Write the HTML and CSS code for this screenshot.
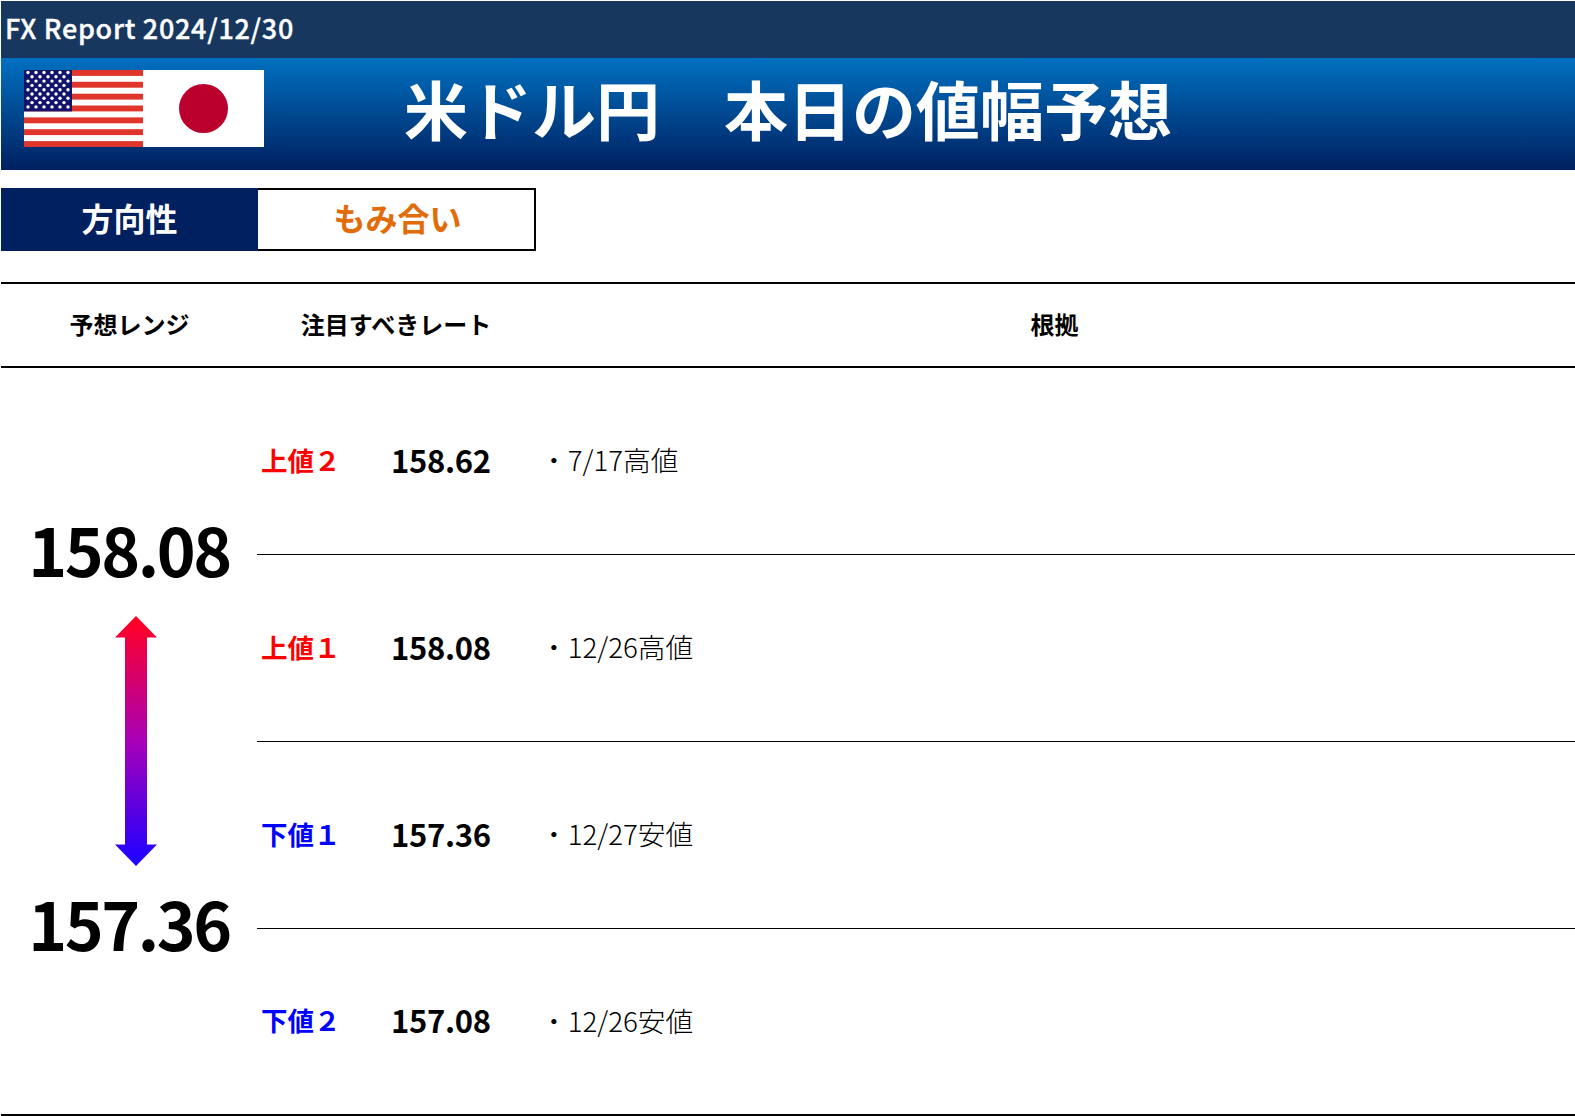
FILE: index.html
```html
<!DOCTYPE html>
<html lang="ja">
<head>
<meta charset="utf-8">
<title>FX Report</title>
<link rel="stylesheet" href="styles.css">
</head>
<body>
<div class="page">
  <div class="topbar">FX Report 2024/12/30</div>
  <header class="banner">
    <div class="flags">
      <svg class="flag" width="119" height="77" viewBox="0 0 119 77" preserveAspectRatio="none">
        <defs>
          <g id="s"><circle r="1.7" fill="#fff"/></g>
        </defs>
        <rect width="119" height="77" fill="#fff"/>
        <g fill="#e0352b">
          <rect y="0" width="119" height="5.9"/><rect y="11.8" width="119" height="5.9"/><rect y="23.7" width="119" height="5.9"/><rect y="35.5" width="119" height="5.9"/><rect y="47.4" width="119" height="5.9"/><rect y="59.2" width="119" height="5.9"/><rect y="71.1" width="119" height="5.9"/>
        </g>
        <rect width="48" height="41.4" fill="#12146b"/>
        <g>
          <use href="#s" x="4" y="2.5"/><use href="#s" x="12" y="2.5"/><use href="#s" x="20" y="2.5"/><use href="#s" x="28" y="2.5"/><use href="#s" x="36" y="2.5"/><use href="#s" x="44" y="2.5"/>
          <use href="#s" x="8" y="6.8"/><use href="#s" x="16" y="6.8"/><use href="#s" x="24" y="6.8"/><use href="#s" x="32" y="6.8"/><use href="#s" x="40" y="6.8"/>
          <use href="#s" x="4" y="11.1"/><use href="#s" x="12" y="11.1"/><use href="#s" x="20" y="11.1"/><use href="#s" x="28" y="11.1"/><use href="#s" x="36" y="11.1"/><use href="#s" x="44" y="11.1"/>
          <use href="#s" x="8" y="15.4"/><use href="#s" x="16" y="15.4"/><use href="#s" x="24" y="15.4"/><use href="#s" x="32" y="15.4"/><use href="#s" x="40" y="15.4"/>
          <use href="#s" x="4" y="19.7"/><use href="#s" x="12" y="19.7"/><use href="#s" x="20" y="19.7"/><use href="#s" x="28" y="19.7"/><use href="#s" x="36" y="19.7"/><use href="#s" x="44" y="19.7"/>
          <use href="#s" x="8" y="24"/><use href="#s" x="16" y="24"/><use href="#s" x="24" y="24"/><use href="#s" x="32" y="24"/><use href="#s" x="40" y="24"/>
          <use href="#s" x="4" y="28.3"/><use href="#s" x="12" y="28.3"/><use href="#s" x="20" y="28.3"/><use href="#s" x="28" y="28.3"/><use href="#s" x="36" y="28.3"/><use href="#s" x="44" y="28.3"/>
          <use href="#s" x="8" y="32.6"/><use href="#s" x="16" y="32.6"/><use href="#s" x="24" y="32.6"/><use href="#s" x="32" y="32.6"/><use href="#s" x="40" y="32.6"/>
          <use href="#s" x="4" y="36.9"/><use href="#s" x="12" y="36.9"/><use href="#s" x="20" y="36.9"/><use href="#s" x="28" y="36.9"/><use href="#s" x="36" y="36.9"/><use href="#s" x="44" y="36.9"/>
        </g>
      </svg>
      <svg class="flag" width="121" height="77" viewBox="0 0 121 77">
        <rect width="121" height="77" fill="#fff"/>
        <circle cx="60.5" cy="38.5" r="24.5" fill="#bc002d"/>
      </svg>
    </div>
    <h1 class="title">米ドル円　本日の値幅予想</h1>
  </header>

  <div class="direction">
    <div class="direction-label">方向性</div>
    <div class="direction-value">もみ合い</div>
  </div>

  <div class="heads">
    <div>予想レンジ</div>
    <div>注目すべきレート</div>
    <div>根拠</div>
  </div>

  <div class="body">
    <div class="range">
      <div class="range-num">158.08</div>
      <svg class="arrow" width="44" height="250" viewBox="0 0 44 250">
        <defs>
          <linearGradient id="ag" x1="0" y1="0" x2="0" y2="1">
            <stop offset="0.02" stop-color="#ff0025"/>
            <stop offset="0.5" stop-color="#a800b8"/>
            <stop offset="0.98" stop-color="#2000ff"/>
          </linearGradient>
        </defs>
        <path d="M22 0 L43 21.5 H33 V228.5 H43 L22 250 L1 228.5 H11 V21.5 H1 Z" fill="url(#ag)"/>
      </svg>
      <div class="range-num">157.36</div>
    </div>
    <div class="rows">
      <div class="row">
        <div class="label up">上値２</div><div class="rate">158.62</div><div class="why">・7/17高値</div>
      </div>
      <div class="row">
        <div class="label up">上値１</div><div class="rate">158.08</div><div class="why">・12/26高値</div>
      </div>
      <div class="row">
        <div class="label down">下値１</div><div class="rate">157.36</div><div class="why">・12/27安値</div>
      </div>
      <div class="row">
        <div class="label down">下値２</div><div class="rate">157.08</div><div class="why">・12/26安値</div>
      </div>
    </div>
  </div>
</div>
</body>
</html>
```

FILE: styles.css
```css
* { box-sizing: border-box; margin: 0; padding: 0; }
html, body { background: #fff; }
body {
  font-family: "Noto Sans CJK JP", "Noto Sans", sans-serif;
  color: #000;
  overflow: hidden;
}
.page {
  width: 1575px;
  height: 1116px;
  padding: 1px 0 0 1px;
}
.topbar {
  height: 57px;
  background: #17375e;
  color: #fff;
  font-size: 27px;
  font-weight: 500;
  letter-spacing: 0.7px;
  -webkit-text-stroke: 0.35px #fff;
  line-height: 53px;
  padding-left: 4px;
}
.banner {
  position: relative;
  height: 112px;
  padding-bottom: 15px;
  background: linear-gradient(#0070c0, #002060);
  display: flex;
  align-items: center;
  justify-content: center;
}
.flags {
  position: absolute;
  left: 23px;
  top: 12px;
  display: flex;
}
.flag { display: block; }
.title {
  color: #fff;
  font-size: 64px;
  font-weight: 700;
  line-height: 1;
  white-space: nowrap;
}
.direction {
  display: flex;
  width: 535px;
  height: 63px;
  margin-top: 18px;
}
.direction-label,
.direction-value {
  font-size: 32px;
  font-weight: 700;
  padding-bottom: 6px;
  display: flex;
  align-items: center;
  justify-content: center;
}
.direction-label {
  width: 257px;
  background: #002060;
  color: #fff;
}
.direction-value {
  flex: 1;
  border: 2px solid #000;
  border-left: 0;
  padding-left: 3px;
  color: #e26b0a;
}
.heads {
  display: grid;
  grid-template-columns: 257px 276px 1fr;
  height: 86px;
  margin-top: 31px;
  padding-bottom: 4px;
  border-top: 2px solid #000;
  border-bottom: 2px solid #000;
  font-size: 24px;
  font-weight: 700;
  align-items: center;
  text-align: center;
}
.body {
  display: grid;
  grid-template-columns: 256px 1fr;
  height: 748px;
  border-bottom: 2px solid #000;
}
.range {
  display: flex;
  flex-direction: column;
  align-items: center;
  justify-content: center;
  padding-bottom: 13px;
}
.range-num {
  font-size: 66px;
  font-weight: 700;
  letter-spacing: -2.4px;
  line-height: 1;
}
.arrow {
  display: block;
  margin: 35px 0 23px 14px;
}
.rows {
  display: grid;
  grid-template-rows: repeat(3, 187px) 1fr;
}
.row {
  display: grid;
  grid-template-columns: 130px 149px 1fr;
  align-items: center;
  padding: 0 0 4px 4px;
  border-bottom: 1px solid #000;
}
.row:last-child { border-bottom: 0; }
.label {
  font-size: 26.5px;
  font-weight: 700;
}
.up { color: #f00; }
.down { color: #00f; }
.rate {
  font-size: 31px;
  font-weight: 700;
  letter-spacing: -0.3px;
}
.why {
  font-size: 27.7px;
  font-weight: 300;
}
```
